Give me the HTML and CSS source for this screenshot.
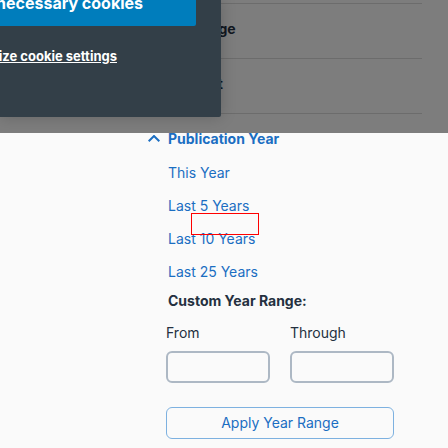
FILE: index.html
```
<!DOCTYPE html>
<html lang="en">
<head>
<meta charset="utf-8">
<title>Publication Year</title>
<link rel="stylesheet" href="styles.css">
</head>
<body>
<main class="filters">
  <section class="facet"><h2 class="facet-title">Language</h2></section>
  <section class="facet"><h2 class="facet-title">Content</h2></section>
  <section class="facet facet-open">
    <h2 class="facet-title">
      <button class="toggle" type="button" aria-expanded="true">
        <svg class="chevron" viewBox="0 0 12 8" aria-hidden="true"><path d="M.7 6.3 6 1l5.3 5.3"/></svg>
        Publication Year
      </button>
    </h2>
    <ul class="years">
      <li><a href="#">This Year</a></li>
      <li><a href="#">Last 5 Years</a></li>
      <li><a href="#">Last 10 Years</a></li>
      <li><a href="#">Last 25 Years</a></li>
    </ul>
    <h3 class="range-title">Custom Year Range:</h3>
    <form class="range">
      <div class="field"><label for="from">From</label><input id="from" type="text"></div>
      <div class="field"><label for="through">Through</label><input id="through" type="text"></div>
      <button class="apply" type="button">Apply Year Range</button>
    </form>
  </section>
</main>
<div class="marker"></div>
<div class="backdrop"></div>
<div class="dialog" role="dialog" aria-label="Cookies">
  <button class="accept" type="button">necessary cookies</button>
  <a class="customize" href="#">ize cookie settings</a>
</div>
</body>
</html>
```
FILE: styles.css
```
* { box-sizing: border-box; }

body {
  margin: 0;
  position: relative;
  overflow: hidden;
  background: #fafafa;
  color: #243040;
  font: 14px/20px Inter, "Liberation Sans", sans-serif;
}

h2, h3 { margin: 0; font-size: 14px; font-weight: 700; }

a { color: #1b6ec2; text-decoration: none; }

.filters { padding: 3px 26px 0 148px; }

.facet {
  height: 55px;
  padding: 15px 0 0 20px;
  border-top: 1px solid #d8d8d8;
}

.facet-open { height: auto; padding-left: 0; }

.toggle {
  display: flex;
  align-items: center;
  gap: 8px;
  padding: 0;
  border: 0;
  background: none;
  color: #1b6ec2;
  font: inherit;
}

.chevron {
  width: 12px;
  height: 8px;
  fill: none;
  stroke: #1b6ec2;
  stroke-width: 2;
}

.years {
  display: grid;
  gap: 13px;
  margin: 14px 0 0;
  padding: 0 0 0 20px;
  list-style: none;
}

.range-title { margin: 9px 0 0 20px; }

.range {
  display: grid;
  grid-template-columns: 1fr 1fr;
  column-gap: 20px;
  row-gap: 24px;
  margin: 12px 28px 0 18px;
}

.field { display: grid; gap: 8px; }

.field input {
  width: 100%;
  height: 32px;
  padding: 0 8px;
  border: 2px solid #adb8c4;
  border-radius: 6px;
  background: transparent;
  font: inherit;
}

.apply {
  grid-column: 1 / -1;
  height: 32px;
  border: 1px solid #7db1e0;
  border-radius: 6px;
  background: transparent;
  color: #1b6ec2;
  font: inherit;
}

.marker {
  position: absolute;
  left: 191px;
  top: 213px;
  width: 68px;
  height: 22px;
  border: 1px solid #f00;
}

.backdrop {
  position: absolute;
  inset: 0 0 auto;
  height: 133px;
  background: rgba(0, 0, 0, 0.5);
}

.dialog {
  position: absolute;
  left: 0;
  top: 0;
  width: 221px;
  height: 117px;
  border-radius: 0 0 2px 0;
  background: #333f48;
  box-shadow: 0 0 16px rgba(0, 0, 0, 0.2);
  clip-path: inset(0 -24px -16px 0);
}

.accept {
  display: flex;
  justify-content: flex-end;
  align-items: flex-start;
  width: 196px;
  height: 26px;
  padding: 0 53px 0 0;
  border: 0;
  border-radius: 0 0 2px 0;
  background: #007dbc;
  color: #fff;
  font: bold 16px/6px Inter, sans-serif;
  white-space: nowrap;
}

.customize {
  display: flex;
  justify-content: flex-end;
  margin-top: 20px;
  padding-right: 104px;
  color: #fff;
  font-size: 13px;
  font-weight: 700;
  white-space: nowrap;
  text-decoration: underline;
}
```
